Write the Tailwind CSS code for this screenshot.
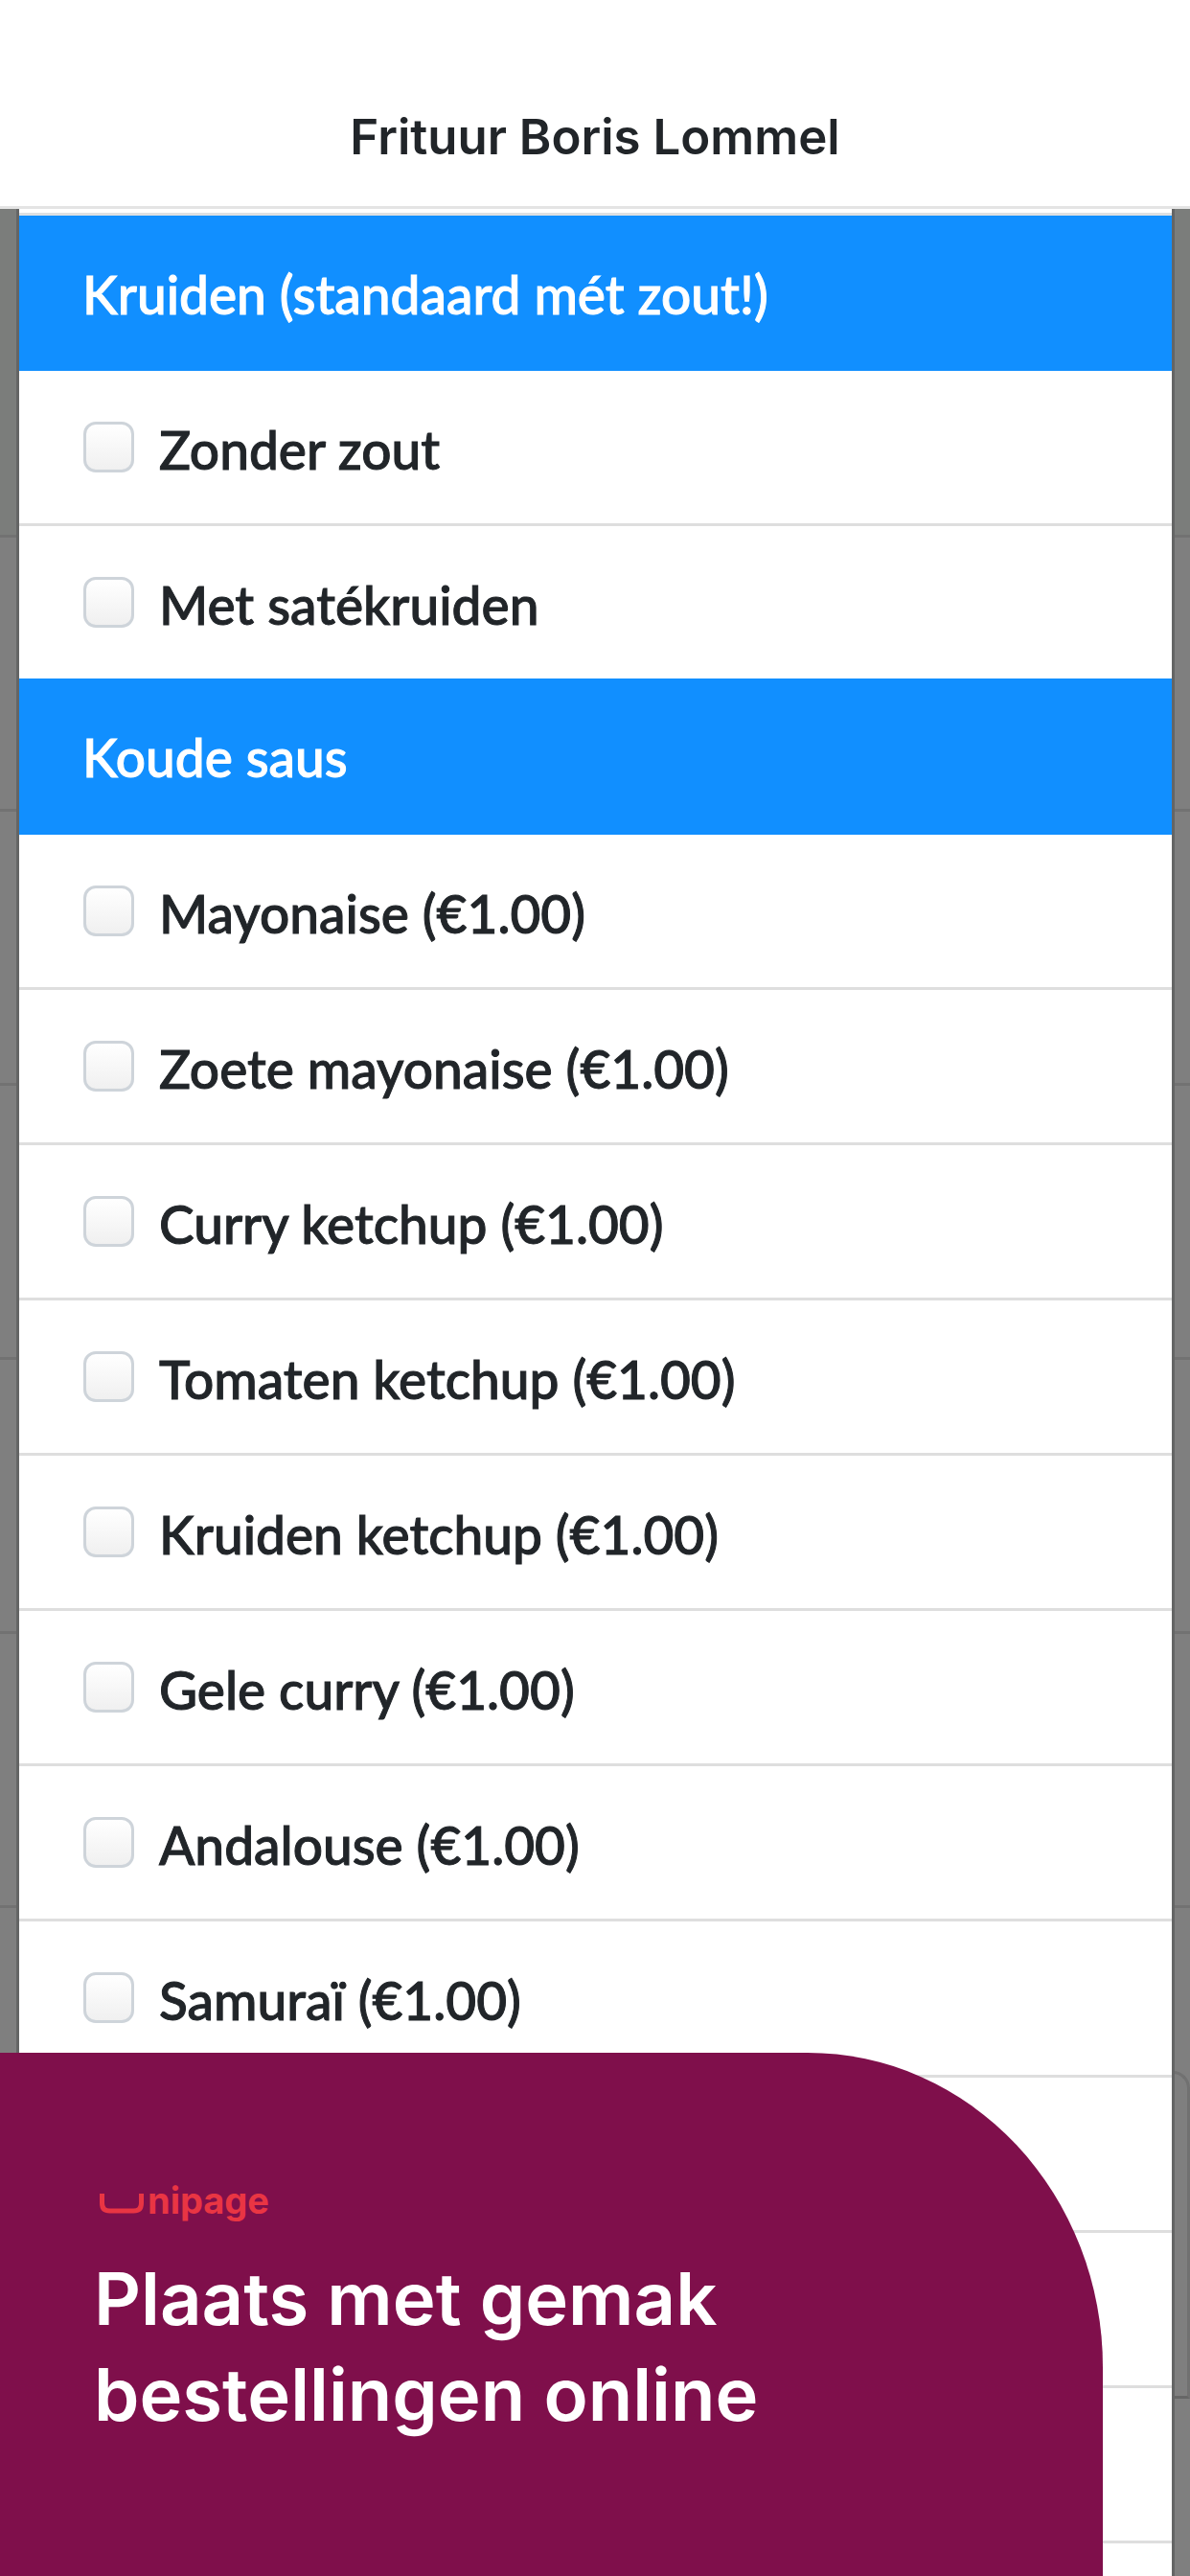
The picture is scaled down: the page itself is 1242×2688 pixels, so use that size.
<!DOCTYPE html>
<html lang="nl">
<head>
    <meta charset="UTF-8">
    <meta name="viewport" content="width=device-width, initial-scale=1.0">
    <title>Frituur Boris Lommel</title>
    <script src="https://cdn.jsdelivr.net/npm/@tailwindcss/browser@4"></script>
</head>
<body class="h-screen overflow-hidden flex flex-col bg-white text-[#212529] font-['Lato',sans-serif]">
    <!-- Header -->
    <header class="shrink-0 h-[218px] pt-[70px] flex items-center justify-center bg-white border-b-3 border-[#e4e4e4]">
        <h1 class="font-['Inter',sans-serif] text-[51px] leading-[60px] font-semibold">Frituur Boris Lommel</h1>
    </header>

    <main class="relative flex-1 overflow-hidden bg-[#7f7f7f]">
        <!-- Page behind the modal -->
        <div class="absolute inset-0">
            <div class="h-[343px] bg-[#7b7d7b] border-b-3 border-[#727272]"></div>
            <div class="h-[286px] border-b-3 border-[#727272]"></div>
            <div class="h-[286px] border-b-3 border-[#727272]"></div>
            <div class="h-[286px] border-b-3 border-[#727272]"></div>
            <div class="h-[286px] border-b-3 border-[#727272]"></div>
            <div class="h-[286px] border-b-3 border-[#727272]"></div>
            <div class="h-[170px]"></div>
            <div class="h-[342px] border-3 border-[#717171] border-b-[#666666] rounded-t-[18px]"></div>
        </div>

        <!-- Options modal -->
        <form class="relative ml-[17px] mr-4 border-x-3 border-[#646565] bg-white [-webkit-text-stroke:1px]">
            <div class="h-[7px] border-b-3 border-[#dee0e2]"></div>

            <fieldset>
                <legend class="w-full h-[162px] pt-[50px] pl-[66px] bg-[#118fff] text-white text-[55px] leading-[64px] font-medium">Kruiden (standaard mét zout!)</legend>
                <label class="flex items-start gap-[26px] h-[162px] pt-[50px] pl-[67px] border-b-3 border-[#dedede]">
                    <input type="checkbox" class="appearance-none shrink-0 mt-[3px] size-[53px] rounded-[13px] border-3 border-[#ced4da] bg-linear-to-b from-white to-[#f0f0f0] checked:from-[#118fff] checked:to-[#118fff]">
                    <span class="text-[55px] leading-[64px] font-medium">Zonder zout</span>
                </label>
                <label class="flex items-start gap-[26px] h-[159px] pt-[50px] pl-[67px]">
                    <input type="checkbox" class="appearance-none shrink-0 mt-[3px] size-[53px] rounded-[13px] border-3 border-[#ced4da] bg-linear-to-b from-white to-[#f0f0f0] checked:from-[#118fff] checked:to-[#118fff]">
                    <span class="text-[55px] leading-[64px] font-medium">Met satékruiden</span>
                </label>
            </fieldset>

            <fieldset>
                <legend class="w-full h-[163px] pt-[50px] pl-[66px] bg-[#118fff] text-white text-[55px] leading-[64px] font-medium">Koude saus</legend>
                <label class="flex items-start gap-[26px] h-[162px] pt-[50px] pl-[67px] border-b-3 border-[#dedede]">
                    <input type="checkbox" class="appearance-none shrink-0 mt-[3px] size-[53px] rounded-[13px] border-3 border-[#ced4da] bg-linear-to-b from-white to-[#f0f0f0] checked:from-[#118fff] checked:to-[#118fff]">
                    <span class="text-[55px] leading-[64px] font-medium">Mayonaise (€1.00)</span>
                </label>
                <label class="flex items-start gap-[26px] h-[162px] pt-[50px] pl-[67px] border-b-3 border-[#dedede]">
                    <input type="checkbox" class="appearance-none shrink-0 mt-[3px] size-[53px] rounded-[13px] border-3 border-[#ced4da] bg-linear-to-b from-white to-[#f0f0f0] checked:from-[#118fff] checked:to-[#118fff]">
                    <span class="text-[55px] leading-[64px] font-medium">Zoete mayonaise (€1.00)</span>
                </label>
                <label class="flex items-start gap-[26px] h-[162px] pt-[50px] pl-[67px] border-b-3 border-[#dedede]">
                    <input type="checkbox" class="appearance-none shrink-0 mt-[3px] size-[53px] rounded-[13px] border-3 border-[#ced4da] bg-linear-to-b from-white to-[#f0f0f0] checked:from-[#118fff] checked:to-[#118fff]">
                    <span class="text-[55px] leading-[64px] font-medium">Curry ketchup (€1.00)</span>
                </label>
                <label class="flex items-start gap-[26px] h-[162px] pt-[50px] pl-[67px] border-b-3 border-[#dedede]">
                    <input type="checkbox" class="appearance-none shrink-0 mt-[3px] size-[53px] rounded-[13px] border-3 border-[#ced4da] bg-linear-to-b from-white to-[#f0f0f0] checked:from-[#118fff] checked:to-[#118fff]">
                    <span class="text-[55px] leading-[64px] font-medium">Tomaten ketchup (€1.00)</span>
                </label>
                <label class="flex items-start gap-[26px] h-[162px] pt-[50px] pl-[67px] border-b-3 border-[#dedede]">
                    <input type="checkbox" class="appearance-none shrink-0 mt-[3px] size-[53px] rounded-[13px] border-3 border-[#ced4da] bg-linear-to-b from-white to-[#f0f0f0] checked:from-[#118fff] checked:to-[#118fff]">
                    <span class="text-[55px] leading-[64px] font-medium">Kruiden ketchup (€1.00)</span>
                </label>
                <label class="flex items-start gap-[26px] h-[162px] pt-[50px] pl-[67px] border-b-3 border-[#dedede]">
                    <input type="checkbox" class="appearance-none shrink-0 mt-[3px] size-[53px] rounded-[13px] border-3 border-[#ced4da] bg-linear-to-b from-white to-[#f0f0f0] checked:from-[#118fff] checked:to-[#118fff]">
                    <span class="text-[55px] leading-[64px] font-medium">Gele curry (€1.00)</span>
                </label>
                <label class="flex items-start gap-[26px] h-[162px] pt-[50px] pl-[67px] border-b-3 border-[#dedede]">
                    <input type="checkbox" class="appearance-none shrink-0 mt-[3px] size-[53px] rounded-[13px] border-3 border-[#ced4da] bg-linear-to-b from-white to-[#f0f0f0] checked:from-[#118fff] checked:to-[#118fff]">
                    <span class="text-[55px] leading-[64px] font-medium">Andalouse (€1.00)</span>
                </label>
                <label class="flex items-start gap-[26px] h-[163px] pt-[50px] pl-[67px] border-b-3 border-[#dedede]">
                    <input type="checkbox" class="appearance-none shrink-0 mt-[3px] size-[53px] rounded-[13px] border-3 border-[#ced4da] bg-linear-to-b from-white to-[#f0f0f0] checked:from-[#118fff] checked:to-[#118fff]">
                    <span class="text-[55px] leading-[64px] font-medium">Samuraï (€1.00)</span>
                </label>
                <div class="h-[162px] border-b-3 border-[#dedede]"></div>
                <div class="h-[162px] border-b-3 border-[#dedede]"></div>
                <div class="h-[162px] border-b-3 border-[#dedede]"></div>
                <div class="h-[162px]"></div>
            </fieldset>
        </form>
    </main>

    <!-- Promo banner -->
    <aside class="absolute bottom-0 left-0 right-[91px] h-[546px] pt-[134px] pl-[98px] bg-[#7f0f4b] text-white font-['Inter',sans-serif] rounded-tr-[308px_328px]">
        <div class="flex items-center gap-1 pl-[6px] text-[#e93543]">
            <svg class="mt-[6px] w-[46px] h-[21px]" viewBox="0 0 46 21" fill="none" stroke="currentColor" stroke-width="5" aria-hidden="true">
                <path d="M2.500 0V10Q2.500 18 10.500 18H35.500Q43.500 18 43.500 10V0"/>
            </svg>
            <span class="text-[38px] leading-[40px] font-bold">nipage</span>
        </div>
        <p class="pt-[32px] text-[76px] leading-[100px] font-semibold">Plaats met gemak<br>bestellingen online</p>
    </aside>
</body>
</html>
